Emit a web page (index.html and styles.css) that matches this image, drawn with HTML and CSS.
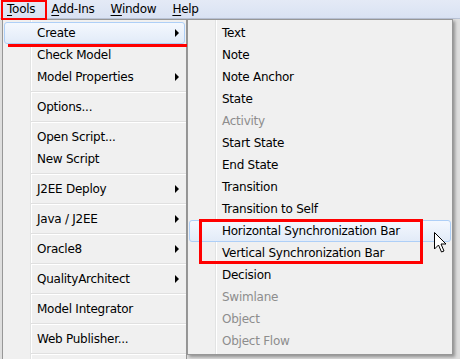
FILE: index.html
```html
<!DOCTYPE html>
<html lang="en">
<head>
  <meta charset="UTF-8" />
  <title>Tools menu</title>
  <link rel="stylesheet" href="styles.css">
</head>
<body>
  <div class="menubar">
    <span class="bar-item"><u>T</u>ools</span>
    <span class="bar-item"><u>A</u>dd-Ins</span>
    <span class="bar-item"><u>W</u>indow</span>
    <span class="bar-item"><u>H</u>elp</span>
  </div>

  <div class="menus">
    <div class="menu main-menu">
      <div class="item hover">Create<span class="arrow"></span></div>
      <div class="item">Check Model</div>
      <div class="item">Model Properties<span class="arrow"></span></div>
      <div class="sep"></div>
      <div class="item">Options...</div>
      <div class="sep"></div>
      <div class="item">Open Script...</div>
      <div class="item">New Script</div>
      <div class="sep"></div>
      <div class="item">J2EE Deploy<span class="arrow"></span></div>
      <div class="sep"></div>
      <div class="item">Java / J2EE<span class="arrow"></span></div>
      <div class="sep"></div>
      <div class="item">Oracle8<span class="arrow"></span></div>
      <div class="sep"></div>
      <div class="item">QualityArchitect<span class="arrow"></span></div>
      <div class="sep"></div>
      <div class="item">Model Integrator</div>
      <div class="sep"></div>
      <div class="item">Web Publisher...</div>
      <div class="sep"></div>
    </div>

    <div class="menu sub-menu">
      <div class="item">Text</div>
      <div class="item">Note</div>
      <div class="item">Note Anchor</div>
      <div class="item">State</div>
      <div class="item disabled">Activity</div>
      <div class="item">Start State</div>
      <div class="item">End State</div>
      <div class="item">Transition</div>
      <div class="item">Transition to Self</div>
      <div class="item hover">Horizontal Synchronization Bar</div>
      <div class="item">Vertical Synchronization Bar</div>
      <div class="item">Decision</div>
      <div class="item disabled">Swimlane</div>
      <div class="item disabled">Object</div>
      <div class="item disabled">Object Flow</div>
    </div>
  </div>

  <!-- red annotations -->
  <div class="mark mark-tools"></div>
  <div class="mark mark-line"></div>
  <div class="mark mark-sync"></div>

  <svg class="cursor" width="13" height="21" viewBox="0 0 13 21">
    <path d="M0.5 0.5 L0.5 17 L4.5 13 L7.5 20 L10 19 L7 12 L12 12 Z" fill="#fff" stroke="#000" stroke-width="1" stroke-linejoin="miter"/>
  </svg>
</body>
</html>
```

FILE: styles.css
```css
body {
  margin: 0;
  height: 359px;
  overflow: hidden;
  background: #dedede;
  font-family: "DejaVu Sans", sans-serif;
  font-size: 12px;
  letter-spacing: -0.25px;
  color: #000;
}
.menubar {
  display: flex;
  height: 18px;
  line-height: 18px;
  background: linear-gradient(#e4eaf6, #d9e2f3);
  border-bottom: 1px solid #b9c3d6;
}
.bar-item {
  padding: 0 8px;
}
.bar-item:first-child {
  padding-left: 7px;
}
.bar-item u {
  text-decoration-thickness: 1px;
  text-underline-offset: 2px;
}
.menus {
  display: flex;
  align-items: flex-start;
  padding-left: 2px;
}
.menu {
  background: #f0f0f0 linear-gradient(to right, transparent 27px, #e2e3e3 27px, #e2e3e3 28px, #fff 28px, #fff 29px, transparent 29px);
  border: 1px solid #979797;
  padding: 2px 0;
}
.main-menu {
  width: 183px;
  padding-bottom: 30px;
}
.sub-menu {
  width: 264px;
  box-shadow: 2px 2px 3px rgba(0, 0, 0, 0.35);
}
.item {
  display: flex;
  align-items: center;
  height: 22px;
  padding-left: 32px;
  margin: 0 1px;
  border: 1px solid transparent;
  border-radius: 3px;
  box-sizing: border-box;
  white-space: nowrap;
}
.item.hover {
  border-color: #aecff7;
  background: linear-gradient(#f4f8fe, #e2ebf8);
}
.item.disabled {
  color: #8d8d8d;
}
.arrow {
  margin-left: auto;
  margin-right: 5px;
  width: 0;
  height: 0;
  border-left: 4px solid #000;
  border-top: 4px solid transparent;
  border-bottom: 4px solid transparent;
}
.sep {
  height: 8px;
  margin-left: 28px;
  background: linear-gradient(transparent 3px, #e0e0e0 3px, #e0e0e0 4px, #fff 4px, #fff 5px, transparent 5px);
}
.mark {
  position: absolute;
  box-sizing: border-box;
}
.mark-tools {
  left: 1px;
  top: 0;
  width: 46px;
  height: 20px;
  border: 2px solid #f00;
}
.mark-line {
  left: 8px;
  top: 44px;
  width: 179px;
  height: 3px;
  background: #f00;
}
.mark-sync {
  left: 199px;
  top: 219px;
  width: 224px;
  height: 45px;
  border: 3px solid #f00;
}
.cursor {
  position: absolute;
  left: 434px;
  top: 232px;
}
```
